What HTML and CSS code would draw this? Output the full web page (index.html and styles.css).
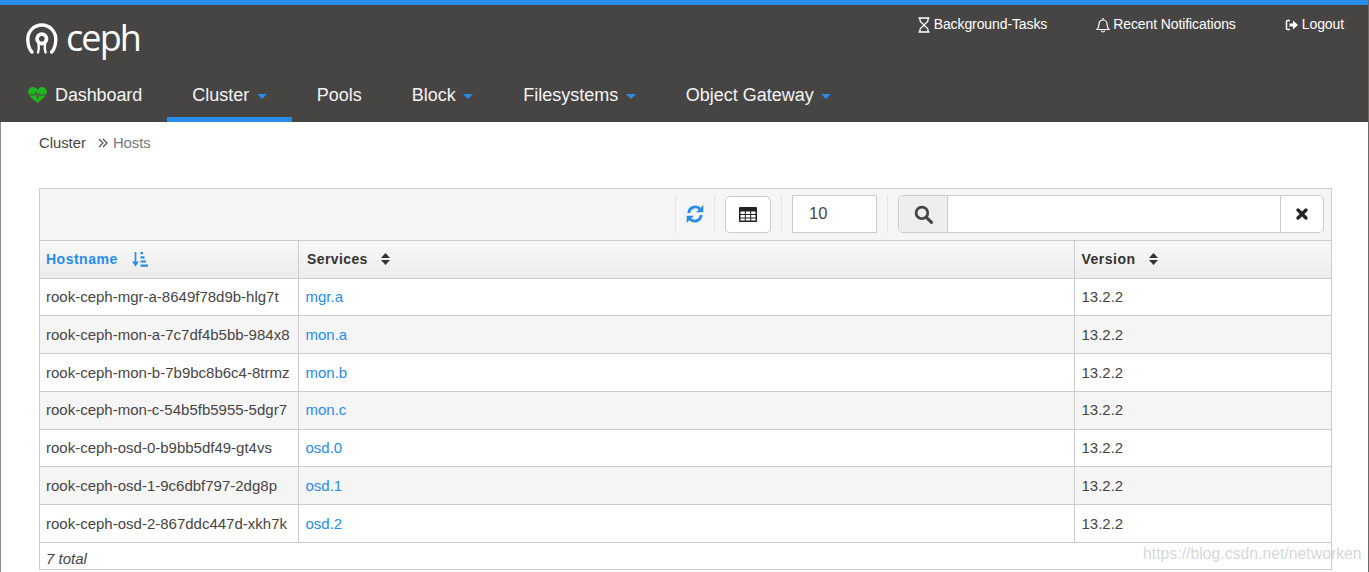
FILE: index.html
```html
<!DOCTYPE html>
<html lang="en">
<head>
<meta charset="utf-8">
<title>Ceph Hosts</title>
<link rel="stylesheet" href="styles.css">
</head>
<body>
<div class="window">
  <header class="navbar">
    <div class="nav-top">
      <a class="brand" href="#">
        <svg class="brand-icon" viewBox="0 0 32 32" width="32" height="32" aria-hidden="true">
          <path d="M6 29C3 26 1.800 21.500 1.800 16a14 14 0 0 1 28 0c0 5.500-1.200 10-4.200 13" fill="none" stroke="#fff" stroke-width="3.400" stroke-linecap="round"/>
          <circle cx="15.800" cy="15.800" r="4.700" fill="none" stroke="#fff" stroke-width="3.800"/>
          <path d="M12 29.500c.8-2 1-5 .6-8.500M19.600 29.500c-.8-2-1-5-.6-8.500" fill="none" stroke="#fff" stroke-width="2.400" stroke-linecap="round"/>
        </svg>
        <span class="brand-text">ceph</span>
      </a>
      <ul class="utility">
        <li class="utility-item">
          <svg class="ico-sm" viewBox="0 0 14 16" aria-hidden="true"><path d="M1.500 1h11M1.500 15h11M3 1v2.500c0 2 4 3.500 4 4.500s-4 2.500-4 4.500V15M11 1v2.500c0 2-4 3.500-4 4.500s4 2.500 4 4.500V15" fill="none" stroke="#fff" stroke-width="1.300"/></svg>
          Background-Tasks
        </li>
        <li class="utility-item">
          <svg class="ico-sm" viewBox="0 0 14 16" aria-hidden="true"><path d="M1 12.500c1.500-1.500 2-3 2-5.500a4 4 0 0 1 8 0c0 2.500.5 4 2 5.500zM5.500 13.500a1.500 1.500 0 0 0 3 0M7 1v2" fill="none" stroke="#fff" stroke-width="1.200"/></svg>
          Recent Notifications
        </li>
        <li class="utility-item">
          <svg class="ico-sm" viewBox="0 0 14 16" aria-hidden="true"><path d="M5 3.500H2.500a1 1 0 0 0-1 1v7a1 1 0 0 0 1 1H5" fill="none" stroke="#fff" stroke-width="1.500"/><path d="M4.500 6.500H8V3.500L13 8l-5 4.500v-3H4.500z" fill="#fff"/></svg>
          Logout
        </li>
      </ul>
    </div>
    <nav class="menu">
      <a class="menu-item menu-home" href="#">
        <svg class="ico-heart" viewBox="0 0 20 17" aria-hidden="true"><path d="M10 17C6 13.500 0 9.500 0 5a5 5 0 0 1 5-5c2.200 0 4 1.200 5 3 1-1.800 2.800-3 5-3a5 5 0 0 1 5 5c0 4.500-6 8.500-10 12z" fill="#1fb51f"/><path d="M1 8.500h6l1.300-3 1.800 6.500 1.500-5 .9 1.500H19" fill="none" stroke="#474544" stroke-width="1"/></svg>
        Dashboard
      </a>
      <a class="menu-item active" href="#">Cluster<span class="caret"></span></a>
      <a class="menu-item" href="#">Pools</a>
      <a class="menu-item" href="#">Block<span class="caret"></span></a>
      <a class="menu-item" href="#">Filesystems<span class="caret"></span></a>
      <a class="menu-item" href="#">Object Gateway<span class="caret"></span></a>
    </nav>
  </header>

  <main class="content">
    <div class="breadcrumb">
      <span>Cluster</span>
      <svg class="crumb-sep" viewBox="0 0 10 10" aria-hidden="true"><path d="M1 1l4 4-4 4M5 1l4 4-4 4" fill="none" stroke="#474544" stroke-width="1.100"/></svg>
      <span class="crumb-current">Hosts</span>
    </div>

    <section class="panel">
      <div class="toolbar">
        <div class="tool-refresh">
          <svg viewBox="0 0 18 18" width="20" height="20" aria-hidden="true"><path d="M2.200 8A7 7 0 0 1 14 3.300L16.500 1v6.500H10l2.300-2.400A4.600 4.600 0 0 0 4.700 8zM15.800 10A7 7 0 0 1 4 14.700L1.500 17v-6.500H8l-2.300 2.400A4.600 4.600 0 0 0 13.300 10z" fill="#288cea"/></svg>
        </div>
        <button class="tool-btn" type="button">
          <svg viewBox="0 0 18 15" width="18" height="15" aria-hidden="true"><path d="M1 0h16a1 1 0 0 1 1 1v13a1 1 0 0 1-1 1H1a1 1 0 0 1-1-1V1a1 1 0 0 1 1-1z" fill="#222"/><path d="M1.500 4.500h4.300v2.500H1.500zM6.800 4.500h4.400v2.500H6.800zM12.200 4.500h4.300v2.500h-4.300zM1.500 8h4.300v2.500H1.500zM6.800 8h4.400v2.500H6.800zM12.200 8h4.300v2.500h-4.300zM1.500 11.500h4.300v2H1.500zM6.800 11.500h4.400v2H6.800zM12.200 11.500h4.300v2h-4.300z" fill="#fff"/></svg>
        </button>
        <span class="tool-divider"></span>
        <div class="page-size">10</div>
        <span class="tool-divider"></span>
        <div class="search">
          <span class="search-addon">
            <svg viewBox="0 0 18 18" width="19" height="19" aria-hidden="true"><circle cx="7.500" cy="7.500" r="5.500" fill="none" stroke="#474544" stroke-width="2.600"/><path d="M11.500 11.500l5 5" stroke="#474544" stroke-width="3" stroke-linecap="round"/></svg>
          </span>
          <span class="search-input"></span>
          <span class="search-clear">
            <svg viewBox="0 0 12 12" width="12" height="12" aria-hidden="true"><path d="M2 2l8 8M10 2l-8 8" stroke="#222" stroke-width="3.200" stroke-linecap="round"/></svg>
          </span>
        </div>
      </div>

      <table class="hosts">
        <colgroup>
          <col class="col-host"><col class="col-services"><col class="col-version">
        </colgroup>
        <thead>
          <tr>
            <th class="sorted">Hostname
              <svg class="ico-sort-active" viewBox="0 0 16 16" aria-hidden="true"><path d="M3.500 1v12M1 10.500l2.500 3.500L6 10.500" fill="none" stroke="#288cea" stroke-width="1.700"/><path d="M8.500 1h2.500v2.200H8.500zM8.500 5.200h4v2.200h-4zM8.500 9.400h5.500v2.200H8.500zM8.500 13.600h7.500v2.200H8.500z" fill="#288cea"/></svg>
            </th>
            <th>Services <svg class="ico-sort" viewBox="0 0 9 12" aria-hidden="true"><path d="M4.500 0L9 5H0zM4.500 12L0 7h9z" fill="#333"/></svg></th>
            <th>Version <svg class="ico-sort" viewBox="0 0 9 12" aria-hidden="true"><path d="M4.500 0L9 5H0zM4.500 12L0 7h9z" fill="#333"/></svg></th>
          </tr>
        </thead>
        <tbody>
          <tr><td>rook-ceph-mgr-a-8649f78d9b-hlg7t</td><td><a href="#">mgr.a</a></td><td>13.2.2</td></tr>
          <tr><td>rook-ceph-mon-a-7c7df4b5bb-984x8</td><td><a href="#">mon.a</a></td><td>13.2.2</td></tr>
          <tr><td>rook-ceph-mon-b-7b9bc8b6c4-8trmz</td><td><a href="#">mon.b</a></td><td>13.2.2</td></tr>
          <tr><td>rook-ceph-mon-c-54b5fb5955-5dgr7</td><td><a href="#">mon.c</a></td><td>13.2.2</td></tr>
          <tr><td>rook-ceph-osd-0-b9bb5df49-gt4vs</td><td><a href="#">osd.0</a></td><td>13.2.2</td></tr>
          <tr><td>rook-ceph-osd-1-9c6dbf797-2dg8p</td><td><a href="#">osd.1</a></td><td>13.2.2</td></tr>
          <tr><td>rook-ceph-osd-2-867ddc447d-xkh7k</td><td><a href="#">osd.2</a></td><td>13.2.2</td></tr>
        </tbody>
      </table>
      <div class="total">7 total</div>
    </section>
  </main>
  <div class="watermark">https://blog.csdn.net/networken</div>
</div>
</body>
</html>
```
FILE: styles.css
```css
* { box-sizing: border-box; }
html, body { margin: 0; height: 100%; overflow: hidden; background: #fff; }
body { font-family: "Liberation Sans", Arial, sans-serif; font-size: 14px; color: #474544; }
a { text-decoration: none; color: inherit; }

.window { position: relative; height: 572px; border-left: 1px solid #8d8d8d; border-right: 1px solid #6b6b6b; }

.navbar { background: #474544; border-top: 5px solid #288cea; height: 122px; margin-left: -1px; color: #fff; }
.nav-top { display: flex; justify-content: space-between; align-items: flex-start; height: 67px; }
.brand { display: flex; align-items: center; padding: 18px 0 0 26px; gap: 8px; }
.brand-icon { width: 32px; height: 32px; display: block; }
.brand-text { font-family: "Open Sans", sans-serif; font-size: 36px; font-weight: 500; line-height: 32px; color: #fff; letter-spacing: -1.900px; margin-top: -3px; }
.utility { list-style: none; display: flex; margin: 0; padding: 11px 24px 0 0; gap: 49px; }
.utility-item { display: flex; align-items: center; gap: 3px; line-height: 17px; font-size: 14px; letter-spacing: -.1px; }
.ico-sm { width: 14px; height: 16px; }

.menu { display: flex; height: 50px; padding-left: 3px; }
.menu-item { display: flex; align-items: center; height: 50px; padding: 1px 25px 0; font-size: 18px; color: #f4f4f4; border-bottom: 5px solid transparent; }
.menu-home { letter-spacing: -.1px; }
.menu-item.active { border-bottom-color: #288cea; }
.caret { width: 0; height: 0; margin: 2px 0 0 7.500px; border-left: 5px solid transparent; border-right: 5px solid transparent; border-top: 5px solid #288cea; }
.ico-heart { width: 19px; height: 16px; margin-right: 8px; }

.content { padding: 0 36px 0 38px; }
.breadcrumb { display: flex; align-items: center; height: 42px; font-size: 14.8px; color: #474544; }
.crumb-sep { width: 10px; height: 10px; margin: 0 5px 0 12px; }
.crumb-current { color: #777; }

.panel { margin-top: 24px; border: 1px solid #ccc; height: 382px; }
.toolbar { display: flex; align-items: flex-start; justify-content: flex-end; height: 52px; padding: 6px 7px 0 0; background: #f5f5f5; border-bottom: 1px solid #ccc; }
.tool-refresh { display: flex; align-items: center; justify-content: center; width: 40px; height: 38px; border-left: 1px solid #e3e3e3; border-right: 1px solid #e3e3e3; }
.tool-btn { display: flex; align-items: center; justify-content: center; width: 46px; height: 37px; margin: 1px 10px 0; padding: 0; background: #fff; border: 1px solid #ccc; border-radius: 5px; }
.tool-divider { width: 1px; height: 38px; background: #e3e3e3; }
.page-size { width: 85px; height: 38px; margin: 0 10px; padding-left: 16px; background: #fff; border: 1px solid #ccc; font-size: 16.500px; line-height: 35px; color: #474544; }
.search { display: flex; width: 426px; height: 38px; margin-left: 10px; background: #fff; border: 1px solid #ccc; border-radius: 5px; overflow: hidden; }
.search-addon { display: flex; align-items: center; justify-content: center; width: 49px; background: #eee; border-right: 1px solid #ccc; }
.search-input { flex: 1; }
.search-clear { display: flex; align-items: center; justify-content: center; width: 43px; border-left: 1px solid #ccc; }

.hosts { width: 1291px; border-collapse: collapse; table-layout: fixed; background: #fff; }
.col-host { width: 258px; }
.col-services { width: 776px; }
.col-version { width: 257px; }
.hosts th { height: 37px; padding: 0 6px; text-align: left; font-size: 14px; letter-spacing: .5px; font-weight: bold; color: #333; background: linear-gradient(#f8f8f8, #ececec); border-bottom: 1px solid #ccc; border-right: 1px solid #ccc; }
.hosts th + th { padding-left: 8.500px; letter-spacing: .4px; }
.hosts th:last-child { padding-left: 7px; border-right: 0; letter-spacing: .5px; }
.hosts th.sorted { color: #288cea; }
.ico-sort-active { width: 16px; height: 16px; margin-left: 10px; vertical-align: -3px; }
.ico-sort { width: 9px; height: 12px; margin-left: 9px; vertical-align: -1px; }
.hosts td { height: 37.75px; padding: 0 6px .5px; font-size: 15px; color: #474544; border-bottom: 1px solid #ccc; border-right: 1px solid #ccc; white-space: nowrap; }
.hosts td:nth-child(2) { padding-left: 7px; }
.hosts td:last-child { padding-left: 7px; border-right: 0; }
.hosts tbody tr:nth-child(even) td { background: #f5f5f5; }
.hosts a { color: #288cea; }
.total { height: 27px; padding: 7px 6px 0; font-size: 15px; line-height: 18px; font-style: italic; color: #474544; }

.watermark { position: absolute; left: 1142px; top: 545px; font-size: 15.800px; line-height: 18px; color: rgba(150, 150, 150, .4); white-space: nowrap; }
```
